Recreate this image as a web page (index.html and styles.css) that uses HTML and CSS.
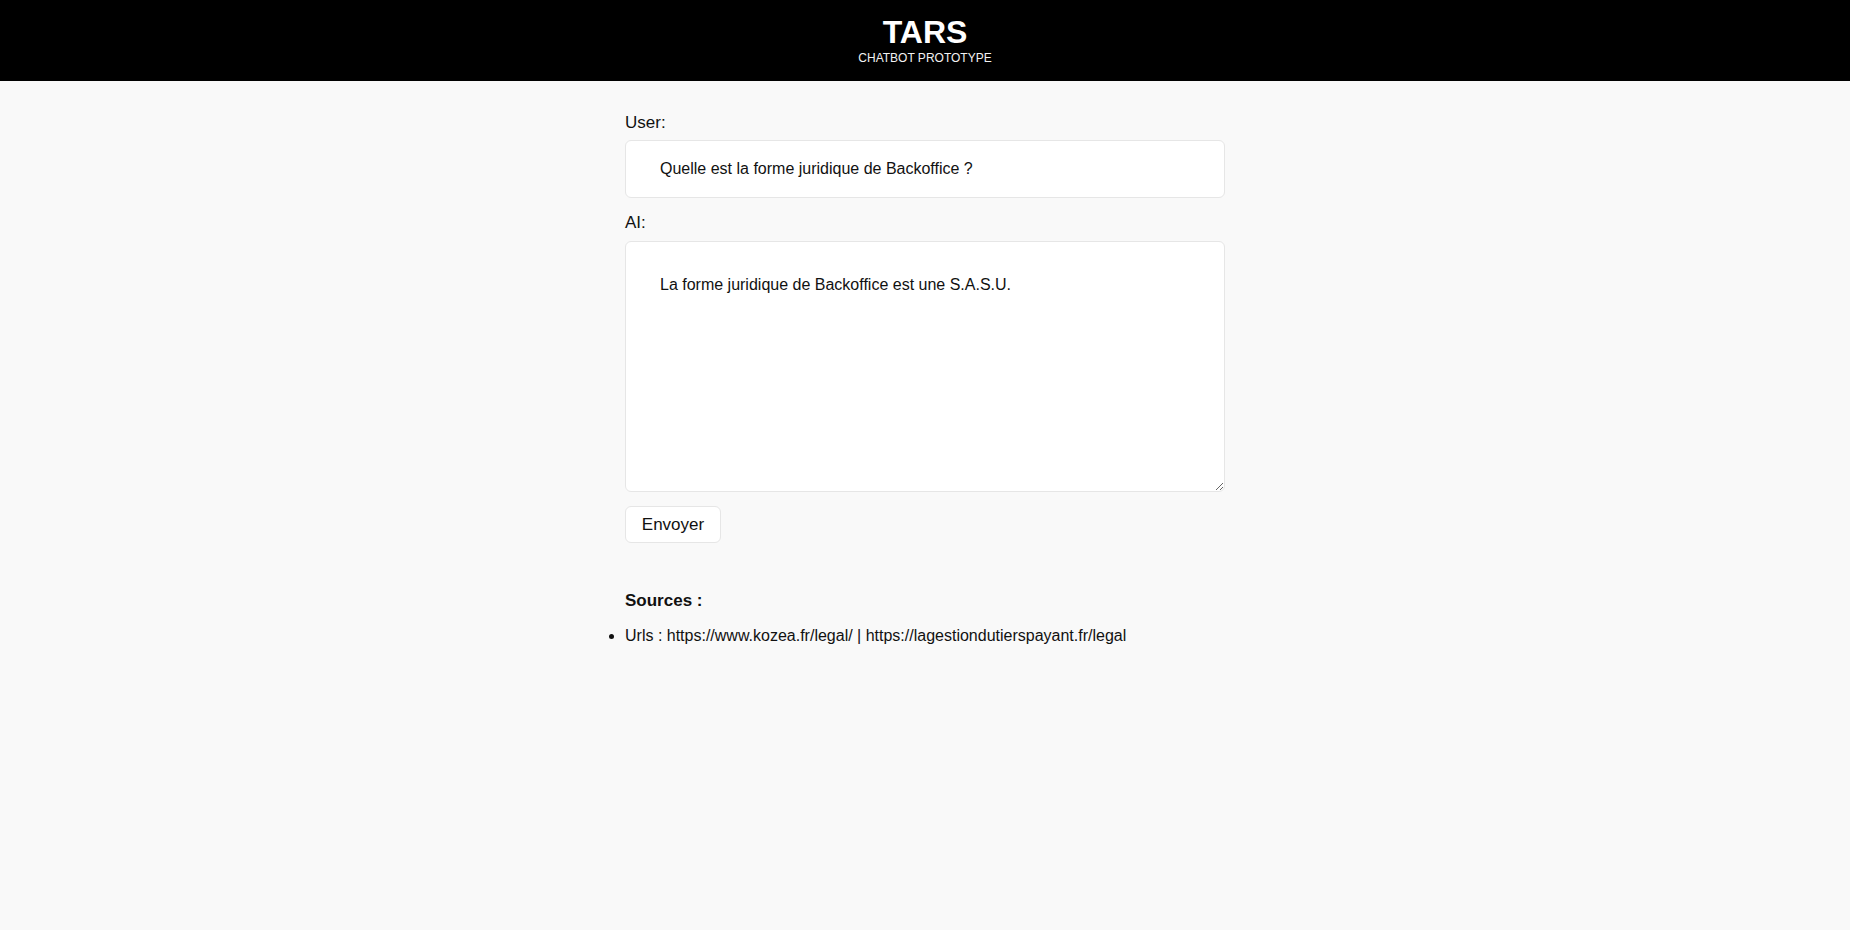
FILE: index.html
```html
<!DOCTYPE html>
<html lang="fr">
<head>
<meta charset="utf-8">
<title>TARS</title>
<link rel="stylesheet" href="styles.css">
</head>
<body>
<header class="app-header">
  <h1 class="app-title">TARS</h1>
  <p class="app-subtitle">CHATBOT PROTOTYPE</p>
</header>
<main class="chat">
  <label class="field-label" for="user-input">User:</label>
  <input class="user-input" id="user-input" type="text" value="Quelle est la forme juridique de Backoffice ?">
  <label class="field-label field-label-ai" for="ai-output">AI:</label>
  <textarea class="ai-output" id="ai-output">La forme juridique de Backoffice est une S.A.S.U.</textarea>
  <div class="actions">
    <button class="send-btn" type="button">Envoyer</button>
  </div>
  <section class="sources">
    <p class="sources-title">Sources :</p>
    <ul class="sources-list">
      <li>Urls : https://www.kozea.fr/legal/ | https://lagestiondutierspayant.fr/legal</li>
    </ul>
  </section>
</main>
</body>
</html>
```

FILE: styles.css
```css
html, body {
  margin: 0;
  padding: 0;
}

body {
  background: #f9f9f9;
  color: #111;
  font-family: "Liberation Sans", Arial, sans-serif;
  font-size: 16px;
}

.app-header {
  background: #000;
  color: #fff;
  text-align: center;
  height: 81px;
  box-sizing: border-box;
  padding-top: 14px;
}

.app-title {
  margin: 0;
  font-size: 32px;
  font-weight: bold;
  line-height: 37px;
}

.app-subtitle {
  margin: 0;
  font-size: 12px;
  line-height: 14px;
  color: #f2f2f2;
}

.chat {
  width: 600px;
  margin: 0 auto;
  padding-top: 33px;
  display: flex;
  flex-direction: column;
}

.field-label {
  display: block;
  font-size: 17px;
  line-height: 18px;
  margin-bottom: 8px;
  color: #111;
}

.field-label-ai {
  margin-top: 16px;
  margin-bottom: 9px;
}

.user-input,
.ai-output {
  box-sizing: border-box;
  width: 600px;
  border: 1px solid #e6e6e6;
  border-radius: 6px;
  background: #fff;
  font-family: "Liberation Sans", Arial, sans-serif;
  font-size: 16px;
  color: #111;
  padding: 0 34px;
  margin: 0;
  outline: none;
}

.user-input {
  height: 58px;
}

.ai-output {
  height: 251px;
  padding-top: 34px;
  padding-bottom: 32px;
  line-height: 18px;
  resize: vertical;
}

.actions {
  display: flex;
  margin-top: 14px;
}

.send-btn {
  font-family: "Liberation Sans", Arial, sans-serif;
  font-size: 17px;
  color: #111;
  background: #fff;
  border: 1px solid #e6e6e6;
  border-radius: 6px;
  width: 96px;
  height: 37px;
  padding: 0;
  cursor: pointer;
}

.sources {
  margin-top: 48px;
}

.sources-title {
  margin: 0;
  font-size: 17px;
  font-weight: bold;
  line-height: 20px;
}

.sources-list {
  margin: 16px 0 0;
  padding: 0;
  list-style: disc outside;
}

.sources-list li {
  line-height: 18px;
}
```
